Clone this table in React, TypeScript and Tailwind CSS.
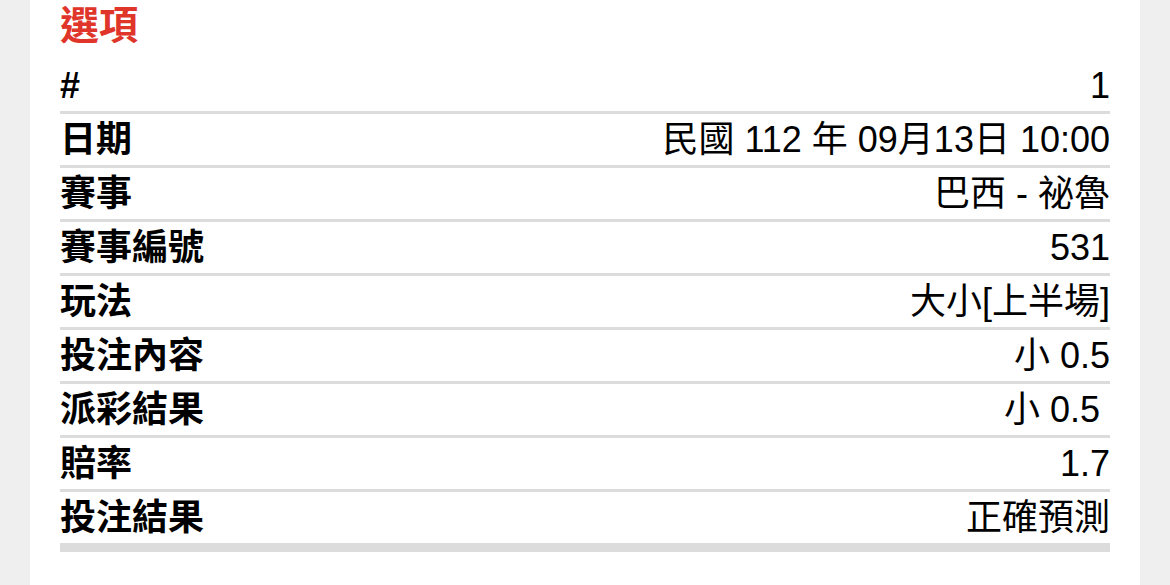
import React from "react";

const rows: [string, string][] = [
  ["#", "1"],
  ["日期", "民國 112 年 09月13日 10:00"],
  ["賽事", "巴西 - 祕魯"],
  ["賽事編號", "531"],
  ["玩法", "大小[上半場]"],
  ["投注內容", "小 0.5"],
  ["派彩結果", "小 0.5\u00a0"],
  ["賠率", "1.7"],
  ["投注結果", "正確預測"],
];

export default function App() {
  return (
    <div
      className="w-[1170px] h-[585px] bg-[#efefef] px-[30px] overflow-hidden"
      style={{ fontFamily: '"Liberation Sans", "Noto Sans CJK TC", sans-serif' }}
    >
      <div className="bg-white h-full px-[30px]">
        <div className="h-[60px] leading-[51px] text-[39px] font-bold text-[#e0352a]">選項</div>
        {rows.map(([k, v], i) => (
          <div
            key={k}
            className={
              i === rows.length - 1
                ? "h-[60px] flex items-center justify-between border-b-[9px] border-[#dcdcdc] text-[36px] text-black"
                : "h-[54px] flex items-center justify-between border-b-[3px] border-[#dcdcdc] text-[36px] text-black"
            }
          >
            <span className="font-bold">{k}</span>
            <span className="whitespace-pre">{v}</span>
          </div>
        ))}
      </div>
    </div>
  );
}
